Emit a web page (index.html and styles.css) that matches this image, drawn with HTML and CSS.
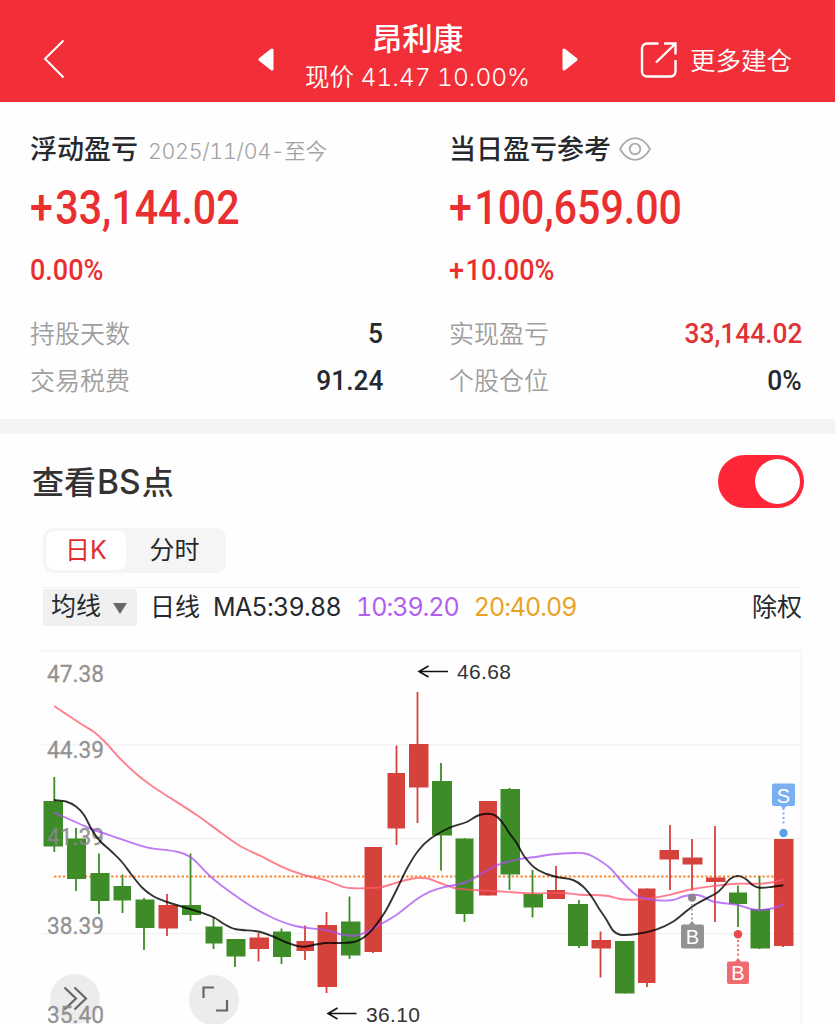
FILE: index.html
```html
<!DOCTYPE html>
<html lang="zh-CN">
<head>
  <meta charset="UTF-8" />
  <meta name="viewport" content="width=device-width, initial-scale=1.0">
  <title>昂利康</title>
  <link rel="stylesheet" href="styles.css">
</head>
<body>

  <header class="topbar">
    <svg class="back" viewBox="0 0 22 40"><path d="M20.5 1.5 2 19.7 20.5 38.5" /></svg>
    <div class="stock">
      <svg class="arrow" viewBox="0 0 16 23"><path d="M14 2v19L2 11.5z" /></svg>
      <div class="stock-info">
        <h1>昂利康</h1>
        <p>现价 41.47 10.00%</p>
      </div>
      <svg class="arrow" viewBox="0 0 16 23"><path d="M2 2v19l12-9.500z" /></svg>
    </div>
    <a class="more">
      <svg viewBox="0 0 38 38">
        <path d="M18.500 2.500H7a5 5 0 0 0-5 5v23a5 5 0 0 0 5 5h23.500a5 5 0 0 0 5-5V19" />
        <path d="M24 2.500h11.500v11M35 3 16 21.500" />
      </svg>
      <span>更多建仓</span>
    </a>
  </header>

  <section class="summary">
    <div class="col">
      <div class="col-head"><h2>浮动盈亏</h2><span class="date">2025/11/04-至今</span></div>
      <div class="amount"><span class="din"><span class="sign">+</span>33,144.02</span></div>
      <div class="percent"><span class="din">0.00%</span></div>
      <div class="row"><span>持股天数</span><b class="din">5</b></div>
      <div class="row"><span>交易税费</span><b class="din">91.24</b></div>
    </div>
    <div class="col">
      <div class="col-head">
        <h2>当日盈亏参考</h2>
        <svg class="eye" viewBox="0 0 32 24"><path d="M1 12C5 5 10 1.200 16 1.200S27 5 31 12c-4 7-9 10.800-15 10.800S5 19 1 12z" /><circle cx="16" cy="12" r="5.300" /></svg>
      </div>
      <div class="amount"><span class="din"><span class="sign">+</span>100,659.00</span></div>
      <div class="percent"><span class="din"><span class="sign">+</span>10.00%</span></div>
      <div class="row"><span>实现盈亏</span><b class="din red">33,144.02</b></div>
      <div class="row"><span>个股仓位</span><b class="din">0%</b></div>
    </div>
  </section>

  <section class="bs">
    <div class="bs-head">
      <h2>查看<span class="en">BS</span>点</h2>
      <div class="switch"><i></i></div>
    </div>
    <div class="tabs">
      <span class="tab active">日K</span>
      <span class="tab">分时</span>
    </div>
    <div class="legend">
      <span class="select">均线<i></i></span>
      <span class="period">日线</span>
      <span class="ma5">MA5:39.88</span>
      <span class="ma10">10:39.20</span>
      <span class="ma20">20:40.09</span>
      <span class="adjust">除权</span>
    </div>
    <svg class="chart" viewBox="0 650 835 374">
      <path class="grid" d="M42 650.500H801.500V1024M42 744.500H801M42 838.500H801M42 933.500H801" />
      <path class="cost" d="M54 876.500H774" />
      <g id="candles"></g>
      <g class="button">
        <circle cx="75" cy="999" r="25" />
        <circle cx="214" cy="1000" r="25" />
        <path d="M64.500 987.500 76 998.500 64.500 1009.500M74.500 987.500 86 998.500 74.500 1009.500" />
        <path d="M203.500 998V987.500H214M227 1000v10.500H216" />
      </g>
      <g class="axis">
        <text x="47" y="681.500" textLength="57" lengthAdjust="spacingAndGlyphs">47.38</text>
        <text x="47" y="757.500" textLength="57" lengthAdjust="spacingAndGlyphs">44.39</text>
        <text x="47" y="845" textLength="57" lengthAdjust="spacingAndGlyphs">41.39</text>
        <text x="47" y="933.500" textLength="57" lengthAdjust="spacingAndGlyphs">38.39</text>
        <text x="47" y="1022.500" textLength="57" lengthAdjust="spacingAndGlyphs">35.40</text>
      </g>
      <g id="lines"></g>
      <g class="extreme">
        <path d="M448 671.500H420M428.500 666 419 671.500 428.500 677" />
        <text x="457" y="679" textLength="54">46.68</text>
        <path d="M356.500 1013.500H329M337.500 1008 328 1013.500 337.500 1019" />
        <text x="366" y="1021.500" textLength="54">36.10</text>
      </g>
      <g class="mark sell">
        <path d="M783.500 808v17" />
        <path class="tag" d="M774 783.500h19q2 0 2 2v18.500q0 2-2 2h-6.500l-3 3-3-3h-6.500q-2 0-2-2v-18.500q0-2 2-2z" />
        <circle cx="783.500" cy="833" r="4.200" />
        <text x="783.500" y="802.500">S</text>
      </g>
      <g class="mark muted">
        <path d="M692 904v18" />
        <path class="tag" d="M683 924.500h6l3-3.500 3 3.500h7q2 0 2 2v20q0 2-2 2h-19q-2 0-2-2v-20q0-2 2-2z" />
        <circle cx="692" cy="897.700" r="4" />
        <text x="692.300" y="944">B</text>
      </g>
      <g class="mark buy">
        <path d="M738 940v16" />
        <path class="tag" d="M729 961.500h6l3-3.500 3 3.500h6q2 0 2 2v18.500q0 2-2 2h-18q-2 0-2-2v-18.500q0-2 2-2z" />
        <circle cx="738" cy="934.300" r="4.200" />
        <text x="738" y="980">B</text>
      </g>
    </svg>
  </section>

  <script src="chart.js"></script>
</body>
</html>
```
FILE: styles.css
```css
*, *::before, *::after {
  box-sizing: border-box;
}

body {
  margin: 0;
  width: 835px;
  height: 1024px;
  overflow: hidden;
  background: #fefefe;
  color: #26292e;
  font-family: Inter, "Noto Sans CJK SC", sans-serif;
  font-variant-numeric: tabular-nums;
}

h1, h2, p {
  margin: 0;
  font-weight: 500;
}

svg {
  display: block;
  flex: none;
}

/* top bar */
.topbar {
  display: grid;
  grid-template-columns: 1fr 320px 1fr;
  align-items: center;
  height: 102px;
  padding: 16px 43px 0;
  background: #f22f38;
  color: #fff;
}

.back {
  width: 22px;
  height: 40px;
  fill: none;
  stroke: #fff;
  stroke-width: 2;
}

.stock {
  display: flex;
  align-items: center;
  justify-content: space-between;
}

.arrow {
  width: 16px;
  height: 23px;
  margin-top: 1px;
  fill: #fff;
  stroke: #fff;
  stroke-width: 3;
  stroke-linejoin: round;
}

.stock-info {
  text-align: center;
  white-space: nowrap;
}

.stock-info h1 {
  font-size: 30.5px;
  line-height: 38px;
}

.stock-info p {
  padding-bottom: 1px;
  font-size: 24.5px;
  font-weight: 350;
  line-height: 39px;
}

.more {
  display: flex;
  align-items: center;
  justify-content: flex-end;
  gap: 12px;
  font-size: 25.5px;
  font-weight: 350;
  white-space: nowrap;
}

.more span {
  padding-bottom: 2px;
}

.more svg {
  width: 38px;
  height: 38px;
  margin-top: 2px;
  fill: none;
  stroke: #fff;
  stroke-width: 2.4;
}

/* profit summary */
.summary {
  display: grid;
  grid-template-columns: 353px 353px;
  gap: 66px;
  height: 332px;
  padding: 26px 30px 0;
  border-bottom: 15px solid #f3f3f3;
}

.col-head {
  display: flex;
  align-items: center;
  gap: 8px;
  height: 40px;
}

.col-head h2 {
  padding-bottom: 1px;
  font-size: 27px;
}

.date {
  margin-left: 2px;
  padding-top: 3px;
  color: #a3a3a3;
  font-size: 21.5px;
  font-weight: 350;
  letter-spacing: -0.35px;
}

.eye {
  width: 32px;
  height: 24px;
  margin-top: 1px;
  fill: none;
  stroke: #aaa;
  stroke-width: 1.8;
}

.din {
  display: inline-block;
  font-family: Roboto, sans-serif;
  font-weight: 500;
  transform-origin: left center;
}

.sign {
  margin-right: 0.06em;
}

.amount {
  height: 79px;
  color: #e92f30;
  font-size: 48px;
  line-height: 78px;
}

.amount .din {
  transform: scaleX(0.857);
}

.percent {
  height: 64px;
  color: #e92f30;
  font-size: 30px;
  line-height: 45px;
}

.percent .din {
  transform: scaleX(0.9);
}

.row {
  display: flex;
  align-items: center;
  justify-content: space-between;
  height: 47px;
  color: #9e9e9e;
  font-size: 25px;
  font-weight: 350;
}

.row span {
  padding-bottom: 6px;
}

.row .din {
  padding-bottom: 2px;
  color: #26292e;
  font-size: 28px;
  transform: scaleX(0.94);
  transform-origin: right center;
}

.row .red {
  color: #e03336;
}

/* BS points */
.bs-head {
  display: flex;
  align-items: center;
  justify-content: space-between;
  height: 94px;
  padding: 0 31px 0 32px;
}

.bs-head h2 {
  padding-bottom: 3px;
  color: #333;
  font-size: 32px;
  font-weight: 450;
}

.bs-head .en {
  margin: 0 1px;
  font-size: 33.5px;
}

.switch {
  display: flex;
  justify-content: flex-end;
  width: 86px;
  height: 53px;
  padding: 4px;
  border-radius: 27px;
  background: #ff2638;
}

.switch i {
  width: 45px;
  height: 45px;
  border-radius: 50%;
  background: #fff;
}

.tabs {
  display: flex;
  width: 183px;
  height: 45px;
  margin-left: 43px;
  padding: 3px;
  border-radius: 10px;
  background: #f5f5f5;
}

.tab {
  flex: 1;
  font-size: 25px;
  line-height: 38px;
  text-align: center;
}

.tab.active {
  flex: none;
  width: 80px;
  border-radius: 8px;
  background: #fff;
  color: #e02d2e;
}

.legend {
  display: flex;
  align-items: center;
  height: 39px;
  margin: 14px 33px 0 43px;
  border-top: 1px solid #f0f0f0;
  font-size: 25px;
  white-space: nowrap;
}

.select {
  display: flex;
  align-items: center;
  justify-content: space-between;
  width: 94px;
  height: 37px;
  padding: 0 10px 6px 8px;
  border-radius: 3px;
  background: #f0f0f0;
}

.select i {
  margin-top: 9px;
  border: 7px solid transparent;
  border-top: 11px solid #666;
  border-bottom: 0;
}

.period,
.adjust {
  padding-bottom: 4px;
}

.period {
  margin-left: 13px;
}

.ma5 {
  margin-left: 13px;
  letter-spacing: -0.7px;
}

.ma10,
.ma20 {
  margin-left: 15px;
  letter-spacing: -1px;
}

.ma10 {
  color: #b25ff0;
}

.ma20 {
  color: #e9a324;
}

.adjust {
  margin-left: auto;
}

/* chart */
.chart {
  width: 835px;
  height: 374px;
  margin-top: 24px;
  fill: none;
}

.grid {
  stroke: #f3f3f3;
  stroke-width: 1.5;
}

.cost {
  stroke: #f58a38;
  stroke-width: 2;
  stroke-dasharray: 2.4 2;
}

.up {
  fill: #d5423b;
}

.down {
  fill: #3e8c27;
}

.line {
  stroke-width: 1.9;
  stroke-linejoin: round;
}

.line-ma5 {
  stroke: #000;
  opacity: 0.8;
}

.line-ma10 {
  stroke: #a850f0;
  opacity: 0.75;
}

.line-ma20 {
  stroke: #ff5468;
  opacity: 0.75;
}

.axis text {
  fill: #888;
  fill-opacity: 0.9;
  stroke: #888;
  stroke-width: 0.3;
  font: 400 24.5px Roboto, sans-serif;
}

.button circle {
  fill: #ececec;
}

.button path {
  stroke: #666;
  stroke-width: 2.2;
}

.extreme path {
  stroke: #111;
  stroke-width: 1.6;
}

.extreme text {
  fill: #333;
  font: 21px "Liberation Sans", sans-serif;
}

.mark path {
  stroke-width: 2;
  stroke-dasharray: 2 2.5;
}

.mark .tag {
  stroke: none;
}

.mark text {
  fill: #fff;
  font: 20px "Liberation Sans", sans-serif;
  text-anchor: middle;
}

.sell path {
  stroke: #7ab0f2;
}

.sell .tag {
  fill: #7ab0f2;
}

.sell circle {
  fill: #5c9fee;
}

.muted path {
  stroke: #aaa;
}

.muted .tag {
  fill: #929292;
}

.muted circle {
  fill: #8c8590;
}

.buy path {
  stroke: #ee6c6f;
}

.buy .tag {
  fill: #ee6c6f;
}

.buy circle {
  fill: #ea484c;
}
```
FILE: chart.js
```js
const NS = 'http://www.w3.org/2000/svg';

// left, right, wick x, high, body top, body bottom, low, direction
const candles = [
  [43.5, 63, 54.3, 777, 801, 846.5, 852, 'down'],
  [67, 86, 76, 828, 838.5, 879, 891, 'down'],
  [90.5, 109.5, 99, 853.5, 873, 901, 914, 'down'],
  [113.5, 131, 122.5, 874.5, 886, 900.5, 913, 'down'],
  [135.5, 154.5, 144, 898, 899.5, 928, 950, 'down'],
  [158.5, 178, 167, 894, 905, 928.5, 936, 'up'],
  [182, 201, 190.5, 853.5, 905, 915, 921, 'down'],
  [205.5, 222.5, 213.5, 917, 926.5, 943.5, 949, 'down'],
  [226.5, 245.5, 235, 939, 939, 956.5, 967, 'down'],
  [249.5, 269, 258.5, 933, 937.5, 949, 961.5, 'up'],
  [273, 291, 281.5, 928.5, 931.5, 957, 964, 'down'],
  [296.5, 314, 305, 925.5, 941, 951, 960, 'up'],
  [317.5, 337, 326.5, 912, 925, 987, 993, 'up'],
  [341, 360.5, 349.5, 896.5, 921.5, 955.5, 959, 'down'],
  [364.5, 382, 373, 847, 847, 952, 953, 'up'],
  [387.5, 405, 396.5, 745.5, 773, 828.5, 845, 'up'],
  [409, 428.5, 417.5, 692, 744, 787.5, 823, 'up'],
  [432, 452, 441, 763, 781, 835.5, 870.5, 'down'],
  [455.5, 473.5, 464.5, 838, 838.5, 914, 922, 'down'],
  [479, 497, 488, 801, 801, 895.5, 895.5, 'up'],
  [500.5, 520, 509.5, 788, 789, 874.5, 890, 'down'],
  [523.5, 543, 532.5, 870, 894, 907.5, 917.5, 'down'],
  [547, 565, 556, 866, 890, 899, 899, 'up'],
  [568, 588, 579, 900, 904, 946, 948, 'down'],
  [591.5, 611, 600.5, 931.5, 940, 948.5, 977.5, 'up'],
  [615, 634.5, 625, 941, 941, 993.5, 993.5, 'down'],
  [638, 655.5, 647, 888.5, 888.5, 983, 987, 'up'],
  [659.5, 679, 670, 825, 850, 859.5, 890, 'up'],
  [682.5, 702.5, 692, 839, 857.5, 864.5, 890.5, 'up'],
  [706, 725.5, 715, 826, 877.5, 882, 922, 'up'],
  [729, 747, 738, 885.5, 892.5, 904, 927, 'down'],
  [750.5, 770, 759.5, 876, 909, 948.5, 949, 'down'],
  [774, 793.5, 783, 839, 839, 946, 947, 'up']
];

const averages = {
  ma20: [[54,706],[80,723.3],[94,732],[106,743],[120,758.5],[136.7,774.3],[153,786.7],[196.7,815],[222,833.5],[240,846],[260,855.7],[283,867.3],[303,874.7],[326.7,880.7],[343,886.8],[353,888.3],[380,887.3],[396.7,882.7],[413,878.5],[426.7,878.3],[440,883],[456.7,888.5],[490,890.7],[533,893.3],[563,893],[580,894.7],[606.7,895.7],[620,899],[633,899.7],[653,898],[673,894],[693,889],[716.7,885.7],[736.7,883.7],[760,883.7],[773,882.3],[783.3,879.3]],
  ma10: [[54,812.7],[80,824],[91.7,829],[113,836.3],[146.7,847.3],[178,852],[191.7,858],[210,876],[222,886],[250,905.5],[273,918],[296.7,926.3],[326.7,930.3],[343,934.8],[356.7,935.5],[370,930],[396.7,914.7],[416.7,899.3],[430,891.7],[446.7,886.5],[456.7,884.7],[466.7,882],[476.7,876.7],[496.7,865.3],[516.7,859.7],[533,857.3],[553,854.3],[573,853],[584,853.3],[593,856.5],[610,868],[620,879.5],[633,892.5],[641,897.5],[656.7,900.3],[673,900],[683,896.5],[693,894.7],[701.7,896],[713,901.5],[737.7,905],[750,908.7],[760,910],[773,908.3],[783.3,904.7]],
  ma5: [[54,800],[66,801.5],[76,806.5],[84,815],[92,830],[100,841],[112,852],[122,862],[131,874],[142,887.5],[153,896],[167,902],[190,909],[213,917],[224,924],[235,929],[258,931.5],[272,936],[288,943],[302,946.7],[316,944.5],[326,943],[340,943],[354,942],[363,938],[372,930],[385,912],[397,889],[407,868.5],[418,851],[430,839],[450,827.5],[466.7,822],[478,815.5],[487,813.7],[495,815.3],[502,822],[510,834],[516.7,843],[524,856],[535,868],[546.7,874],[556.7,877],[573,880],[583,886.5],[591.7,896.7],[599,908.5],[606,919],[613,930.5],[620,934.7],[636.7,934],[656.7,929.3],[673.3,921.5],[691.7,907],[706.7,898.3],[716.7,893],[723.3,886.7],[730,879],[737.7,875.9],[745,878.5],[753.3,885.5],[760,887.7],[773,886.7],[783.3,885.3]]
};

function add(parent, tag, attrs) {
  const el = document.createElementNS(NS, tag);
  for (const key in attrs) el.setAttribute(key, attrs[key]);
  parent.appendChild(el);
}

// smooth path through all points, tangents follow the neighbours' slope
function curve(p) {
  const slope = (i) => {
    const a = p[Math.max(i - 1, 0)], b = p[Math.min(i + 1, p.length - 1)];
    return (b[1] - a[1]) / (b[0] - a[0]);
  };
  let d = `M${p[0]}`;
  for (let i = 0; i < p.length - 1; i++) {
    const [x1, y1] = p[i], [x2, y2] = p[i + 1];
    const dx = (x2 - x1) / 3;
    d += `C${x1 + dx} ${y1 + dx * slope(i)} ${x2 - dx} ${y2 - dx * slope(i + 1)} ${x2} ${y2}`;
  }
  return d;
}

const candleGroup = document.getElementById('candles');
candles.forEach(([left, right, x, high, top, bottom, low, dir]) => {
  add(candleGroup, 'rect', { class: dir, x: x - 0.9, y: high, width: 1.8, height: low - high });
  add(candleGroup, 'rect', { class: dir, x: left, y: top, width: right - left, height: bottom - top });
});

const lineGroup = document.getElementById('lines');
for (const name in averages) {
  add(lineGroup, 'path', { class: `line line-${name}`, d: curve(averages[name]) });
}
```
